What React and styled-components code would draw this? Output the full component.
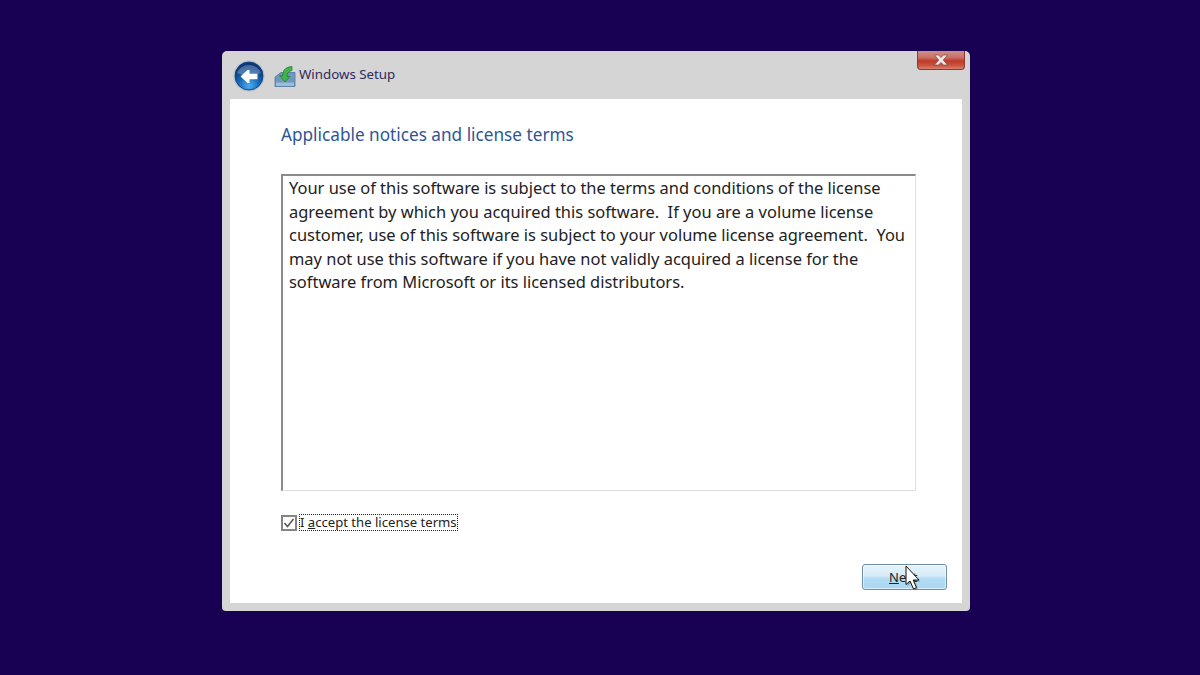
import React from "react";
import styled, { createGlobalStyle } from "styled-components";

const Global = createGlobalStyle`
  html, body { margin: 0; padding: 0; background: #180052; }
  body { font-family: "Noto Sans", "Open Sans", "Liberation Sans", sans-serif; }
`;
const Page = styled.div`
  width: 1200px; height: 675px; box-sizing: border-box; overflow: hidden;
  background: #180052; padding: 51px 0 0 222px; position: relative;
`;
const Win = styled.div`
  width: 748px; height: 560px; box-sizing: border-box; background: #d5d5d5;
  border-radius: 5px 5px 4px 4px; padding: 0 8px 8px; display: flex; flex-direction: column;
`;
const TitleBar = styled.div`
  height: 48px; flex: none; display: flex; align-items: flex-start;
  margin-left: 3px; margin-right: -3px;
`;
const BackWrap = styled.div`margin-top: 9px; width: 32px; height: 32px; flex: none;`;
const AppIcon = styled.div`margin: 15px 0 0 9px; width: 22px; height: 22px; flex: none;`;
const WinTitle = styled.div`
  margin: 14px 0 0 3px; font-size: 13.3px; line-height: 18px; color: #2f2a5c; white-space: nowrap;
`;
const Close = styled.div`
  margin-left: auto; width: 48px; height: 19px; box-sizing: border-box; flex: none;
  border: 1px solid #8c3a30; border-top: none; border-radius: 0 0 4px 4px;
  background: linear-gradient(#cf8f85 0%, #c8726a 35%, #c03a28 55%, #c9543f 80%, #d9836e 100%);
  display: flex; align-items: center; justify-content: center;
`;
const Client = styled.div`
  flex: 1; background: #fff; display: flex; flex-direction: column; padding: 0 15px 13px 51px;
`;
const Heading = styled.h1`
  margin: 24px 0 0; font-weight: 400; font-size: 17.2px; line-height: 24px; color: #2f5597; white-space: nowrap;
`;
const TermsBox = styled.div`
  margin: 27px 31px 0 0; height: 317px; box-sizing: border-box;
  border-style: solid; border-width: 2px 1px 1px 2px;
  border-color: #8b8b8b #dfdfdf #dfdfdf #8b8b8b;
  padding: 0 6px; font-size: 16.44px; line-height: 23.5px; color: #222;
`;
const TermLine = styled.div`white-space: pre;`;
const AcceptRow = styled.div`margin-top: 24px; display: flex; align-items: center; height: 15px;`;
const Check = styled.div`
  width: 16px; height: 16px; box-sizing: border-box; border: 2px solid #858585; background: #fff; flex: none;
  display: flex; align-items: center; justify-content: center; margin-right: 2px;
`;
const AcceptLabel = styled.div`
  outline: 1px dotted #222; outline-offset: -1px; padding: 0 1px; height: 17px;
  font-size: 13.1px; line-height: 17px; color: #222; white-space: nowrap;
`;
const Footer = styled.div`margin-top: auto; display: flex; justify-content: flex-end; position: relative;`;
const NextBtn = styled.div`
  width: 85px; height: 26px; box-sizing: border-box; border: 1px solid #6e8fa8; border-radius: 3px;
  background: linear-gradient(#e6f3fb 0%, #d6ebf8 45%, #b4dcf3 55%, #a9d7f2 100%);
  box-shadow: inset 0 0 0 1px rgba(255,255,255,.55);
  padding-left: 26px; font-size: 13px; line-height: 24px; color: #222;
`;
const Cursor = styled.svg`position: absolute; right: 25px; top: 1px;`;

const lines = [
  "Your use of this software is subject to the terms and conditions of the license",
  "agreement by which you acquired this software.  If you are a volume license",
  "customer, use of this software is subject to your volume license agreement.  You",
  "may not use this software if you have not validly acquired a license for the",
  "software from Microsoft or its licensed distributors.",
];

export default function App() {
  return (
    <Page>
      <Global />
      <Win>
        <TitleBar>
          <BackWrap>
            <svg width="32" height="32" viewBox="0 0 32 32">
              <defs>
                <radialGradient id="bg" cx="50%" cy="85%" r="70%">
                  <stop offset="0" stopColor="#4aaef0" />
                  <stop offset="0.55" stopColor="#1766b6" />
                  <stop offset="1" stopColor="#0b3a7c" />
                </radialGradient>
              </defs>
              <circle cx="16" cy="16" r="15.6" fill="#b9c1cc" />
              <circle cx="16" cy="16" r="14" fill="url(#bg)" stroke="#0d3a72" strokeWidth="0.8" />
              <path d="M4 13 A12.5 11 0 0 1 28 13 Q16 18 4 13Z" fill="#fff" opacity="0.25" />
              <path d="M7.5 16.5 L14.5 10 L16.5 10 V13.8 H24.5 V19.2 H16.5 V23 L14.5 23 Z" fill="#fff" strokeLinejoin="round" />
            </svg>
          </BackWrap>
          <AppIcon>
            <svg width="22" height="22" viewBox="0 0 22 22">
              <path d="M1 11 L7 6.5 H21 V20.5 H1 Z" fill="#6f97bf" stroke="#4f76a0" strokeWidth="0.8" />
              <rect x="2" y="16.5" width="18" height="3.5" fill="#9dbcd8" />
              <path d="M18 0.5 Q10 1 9 7 L8.5 10 L5.5 9.5 L11 16 L16 10.5 L13 10.3 L13.5 7.5 Q14.5 5 18 4.5 Z" fill="#3fb54a" stroke="#1f7a2b" strokeWidth="0.7" />
            </svg>
          </AppIcon>
          <WinTitle>Windows Setup</WinTitle>
          <Close>
            <svg width="16" height="12" viewBox="0 0 16 12">
              <path d="M1.5 1 H5.5 L8 3.6 L10.5 1 H14.5 L10.2 6 L14.5 11 H10.5 L8 8.4 L5.5 11 H1.5 L5.8 6 Z" fill="#e9e9e9" stroke="#7a3a34" strokeWidth="0.6" />
            </svg>
          </Close>
        </TitleBar>
        <Client>
          <Heading>Applicable notices and license terms</Heading>
          <TermsBox>
            {lines.map((l) => <TermLine key={l}>{l}</TermLine>)}
          </TermsBox>
          <AcceptRow>
            <Check>
              <svg width="12" height="12" viewBox="0 0 12 12">
                <path d="M1.5 6 L4.5 9.5 L10.5 2" fill="none" stroke="#555" strokeWidth="1.5" />
              </svg>
            </Check>
            <AcceptLabel>I <u>a</u>ccept the license terms</AcceptLabel>
          </AcceptRow>
          <Footer>
            <NextBtn><u>N</u>ext</NextBtn>
            <Cursor width="17" height="28" viewBox="0 0 17 28">
              <path d="M2.5 3 V21 L6.5 17.5 L10 25.5 L13 24 L9.7 16.5 H15.5 Z" fill="#555" opacity="0.45" />
              <path d="M1 1 V19.5 L5 16 L8.5 24 L11.5 22.5 L8.2 15 H14 Z" fill="#fff" stroke="#111" strokeWidth="1" strokeLinejoin="round" />
            </Cursor>
          </Footer>
        </Client>
      </Win>
    </Page>
  );
}
